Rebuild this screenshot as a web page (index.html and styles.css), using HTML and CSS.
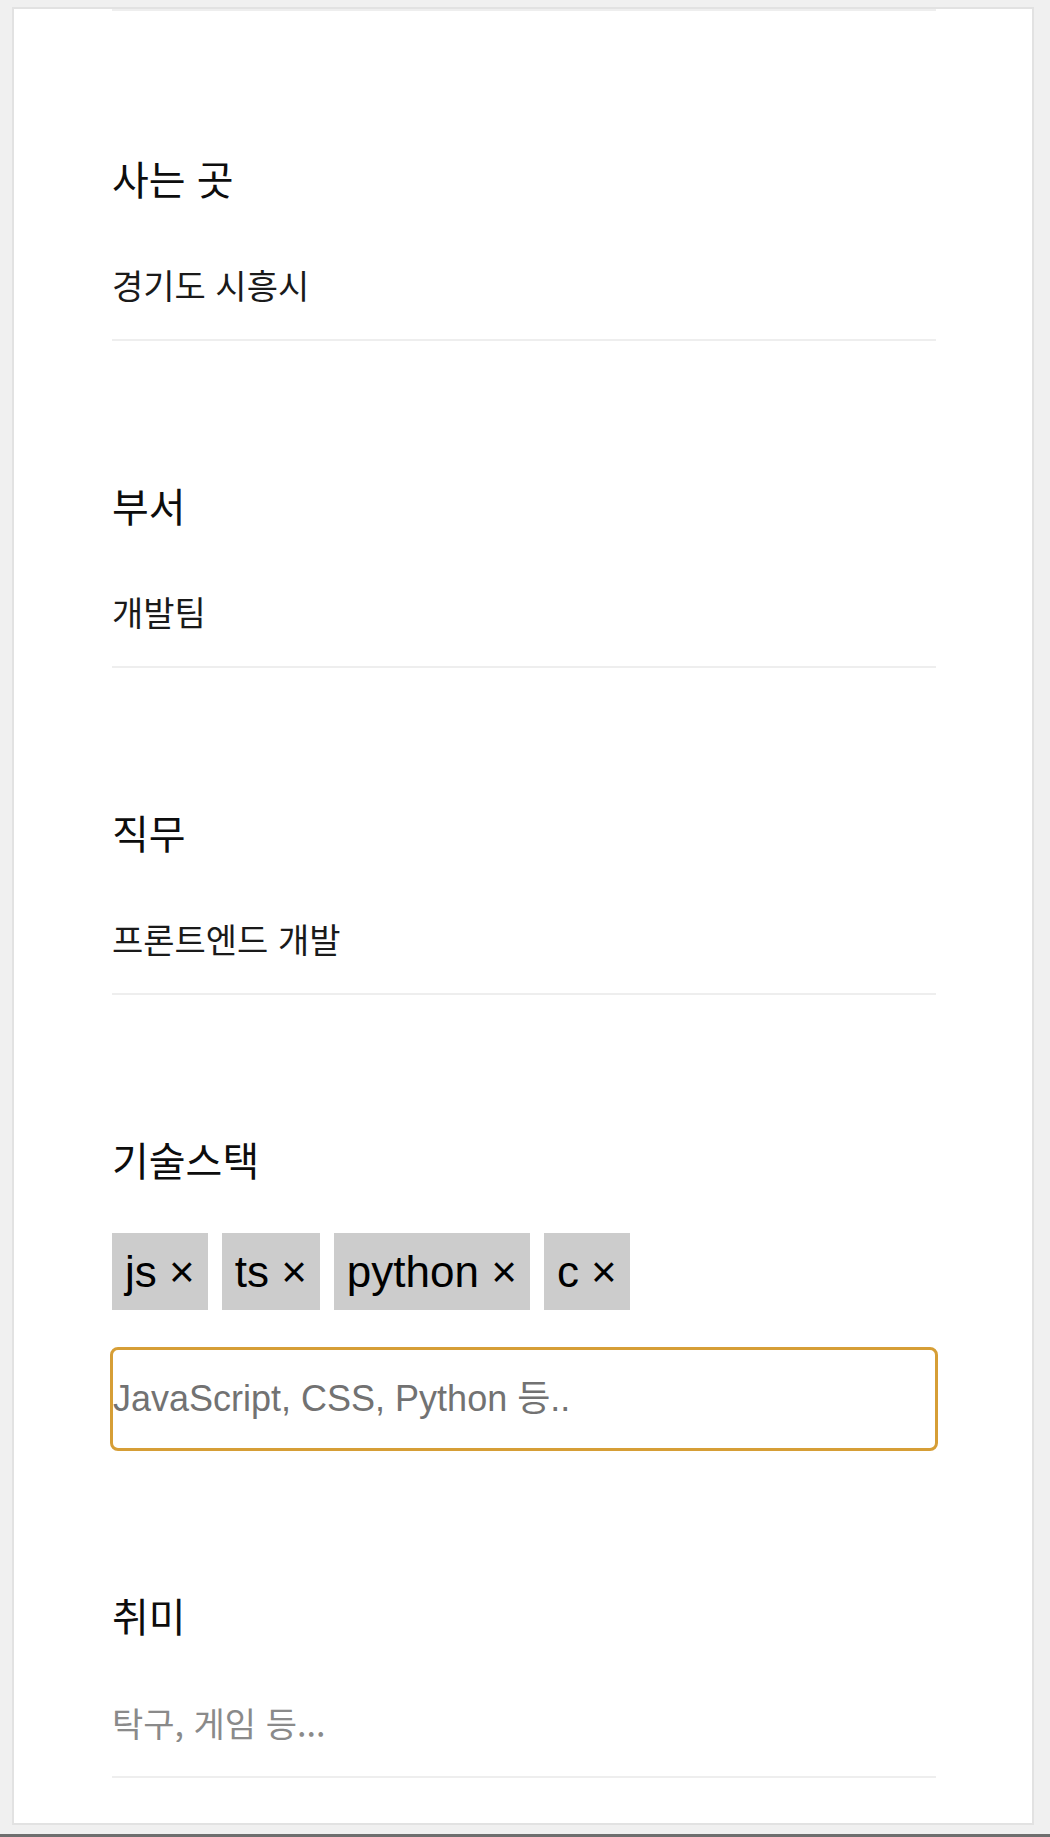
FILE: index.html
```html
<!DOCTYPE html>
<html lang="ko">
<head>
<meta charset="utf-8">
<title>프로필</title>
<link rel="stylesheet" href="styles.css">
</head>
<body>
<div class="frame">
  <div class="card">
    <div class="top-line"></div>
    <section class="field first">
      <h3 class="label">사는 곳</h3>
      <div class="value">경기도 시흥시</div>
    </section>
    <section class="field">
      <h3 class="label">부서</h3>
      <div class="value">개발팀</div>
    </section>
    <section class="field">
      <h3 class="label">직무</h3>
      <div class="value">프론트엔드 개발</div>
    </section>
    <section class="field stack">
      <h3 class="label">기술스택</h3>
      <div class="tags">
        <span class="tag">js ×</span>
        <span class="tag">ts ×</span>
        <span class="tag">python ×</span>
        <span class="tag">c ×</span>
      </div>
      <input class="stack-input" type="text" placeholder="JavaScript, CSS, Python 등..">
    </section>
    <section class="field hobby">
      <h3 class="label">취미</h3>
      <input class="value-input" type="text" placeholder="탁구, 게임 등...">
    </section>
  </div>
  <div class="bottom-bar"></div>
</div>
</body>
</html>
```

FILE: styles.css
```css
html, body {
  margin: 0;
  padding: 0;
}
body {
  background: #f0f0f0;
  font-family: "Noto Sans CJK KR", "Noto Sans", sans-serif;
  width: 1050px;
  height: 1837px;
  overflow: hidden;
}
.frame {
  display: flex;
  flex-direction: column;
  padding: 7px 0 0 12px;
  height: 1837px;
  box-sizing: border-box;
}
.card {
  width: 1022px;
  height: 1818px;
  box-sizing: border-box;
  background: #ffffff;
  border: 2px solid #e2e2e2;
  padding: 0 96px 0 98px;
  overflow: hidden;
}
.top-line {
  margin-top: 0;
  height: 2px;
  background: #eeeeee;
}
.field {
  padding: 141px 0 34px;
  border-bottom: 2px solid #eeeeee;
}
.field.first {
  padding-top: 144px;
}
.label {
  margin: 0;
  font-size: 40px;
  line-height: 46px;
  font-weight: 400;
  color: #0d0d0d;
}
.value {
  margin-top: 64px;
  font-size: 34px;
  line-height: 40px;
  color: #1a1a1a;
}
.stack {
  border-bottom: none;
  padding-bottom: 0;
}
.tags {
  display: flex;
  gap: 14px;
  margin-top: 51px;
}
.tag {
  display: inline-flex;
  align-items: center;
  height: 77px;
  padding: 0 13px;
  background: #cccccc;
  color: #000000;
  font-family: "Liberation Sans", Arial, sans-serif;
  font-size: 44px;
}
.stack-input {
  display: block;
  margin-top: 37px;
  width: 828px;
  margin-left: -2px;
  height: 104px;
  box-sizing: border-box;
  border: 3px solid #d69e36;
  border-radius: 8px;
  padding: 0;
  outline: none;
  background: #ffffff;
  font-family: "Liberation Sans", Arial, "Noto Sans CJK KR", sans-serif;
  font-size: 36px;
  color: #333333;
}
.stack-input::placeholder {
  color: #727272;
}
.hobby {
  padding-top: 141px;
}
.value-input {
  display: block;
  margin-top: 64px;
  width: 100%;
  height: 40px;
  border: none;
  padding: 0;
  outline: none;
  font-family: "Noto Sans CJK KR", sans-serif;
  font-size: 34px;
  background: transparent;
}
.value-input::placeholder {
  color: #8a8a8a;
}
.bottom-bar {
  margin-top: auto;
  margin-left: -12px;
  height: 3px;
  background: #6e6e6e;
}
```
